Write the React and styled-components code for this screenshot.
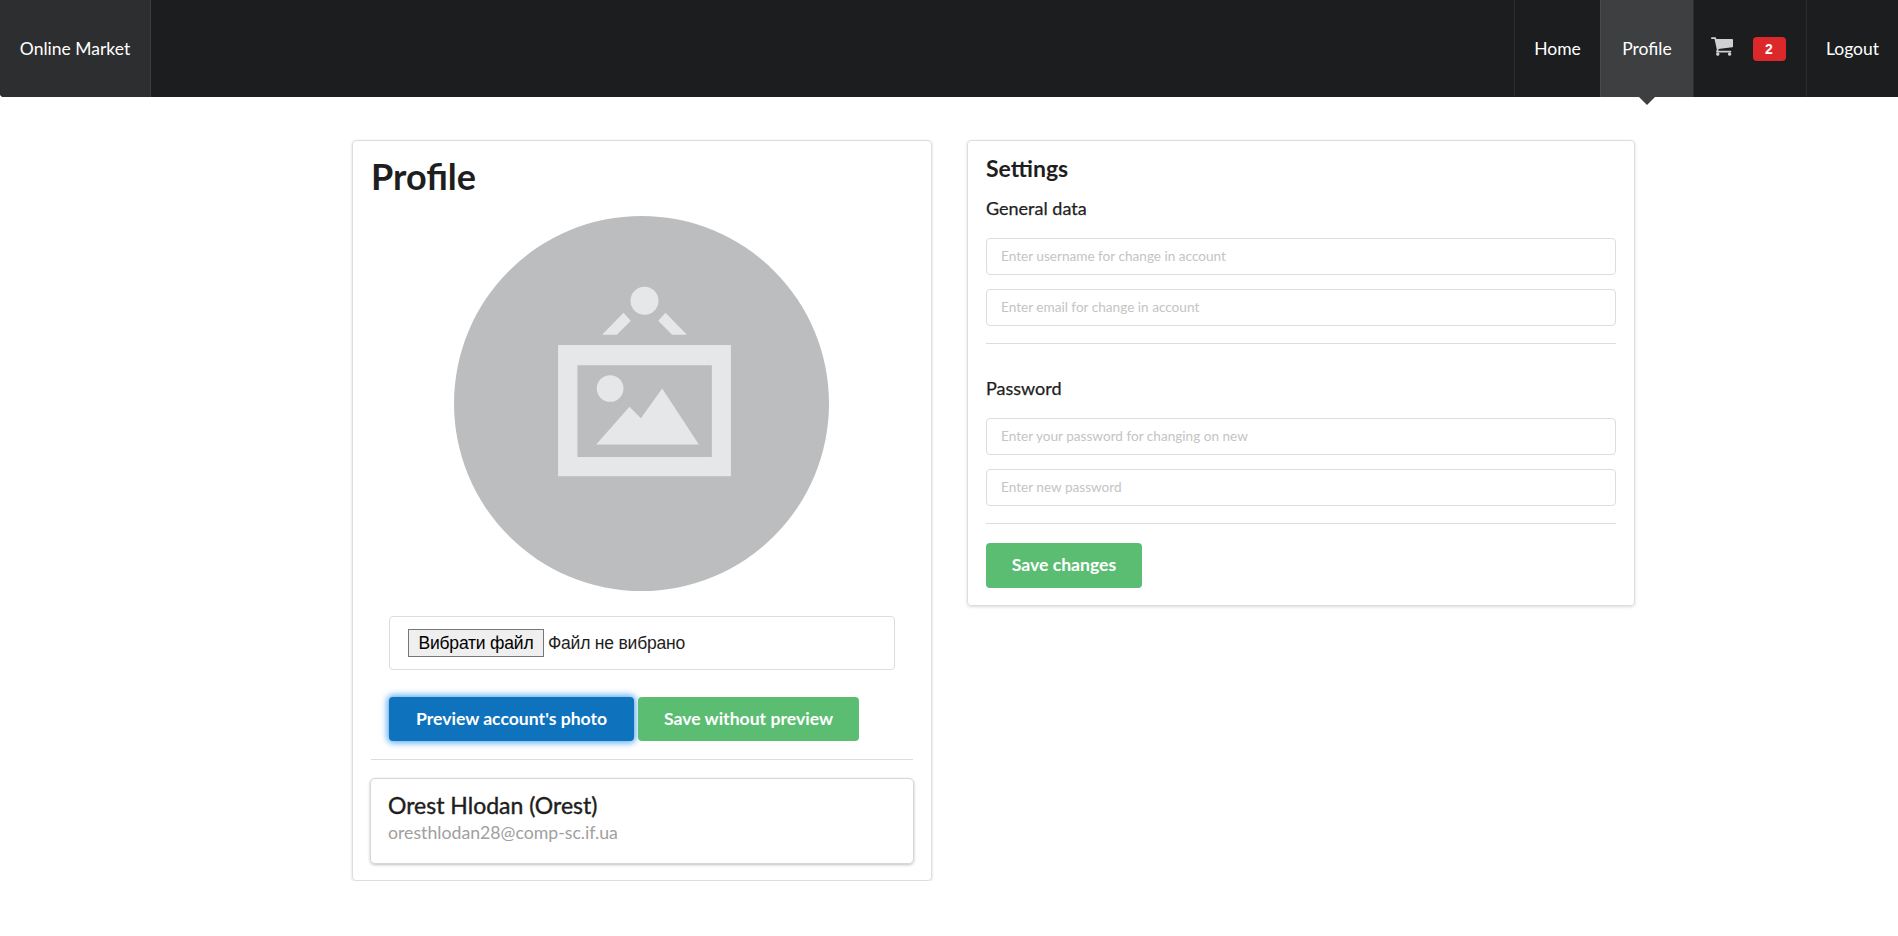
import React from 'react';
import styled, { createGlobalStyle } from 'styled-components';

const GlobalStyle = createGlobalStyle`
    body {
        margin: 0;
        background: #fff;
        font-family: Lato, "Liberation Sans", sans-serif;
        color: #1e1e1e;
    }
`;

const Navbar = styled.nav`
    display: flex;
    height: 97px;
    background: #1c1d1f;
    border-radius: 0 0 0 4px;
`;

const Brand = styled.div`
    display: flex;
    align-items: center;
    justify-content: center;
    width: 150px;
    background: #2d2e30;
    border-right: 1px solid #3d3e40;
    border-radius: 0 0 0 4px;
    color: #fff;
    font-size: 17.5px;
`;

const NavRight = styled.div`
    display: flex;
    margin-left: auto;
`;

const NavItem = styled.div`
    position: relative;
    box-sizing: border-box;
    display: flex;
    align-items: center;
    justify-content: center;
    gap: ${(p) => p.$gap || 0}px;
    width: ${(p) => p.$width}px;
    padding-right: ${(p) => p.$gap ? 4 : 0}px;
    border-left: 1px solid ${(p) => (p.$active ? '#4a4b4d' : '#2c2d2f')};
    background: ${(p) => (p.$active ? '#3e3f41' : 'transparent')};
    color: #fff;
    font-size: 17.5px;

    ${(p) => p.$active && `
        &::after {
            content: '';
            position: absolute;
            left: 50%;
            top: 97px;
            margin-left: -8px;
            border: 8px solid transparent;
            border-top-color: #3e3f41;
            border-bottom: 0;
        }
    `}
`;

const CartIcon = styled.svg`
    width: 22px;
    height: 19px;
    margin-top: -5px;
    fill: #d0d0d0;
`;

const Badge = styled.span`
    display: flex;
    align-items: center;
    justify-content: center;
    width: 33px;
    height: 24px;
    background: #dc282b;
    border-radius: 4px;
    font-family: "Liberation Sans", sans-serif;
    font-size: 14px;
    font-weight: 700;
`;

const Main = styled.main`
    display: flex;
    align-items: flex-start;
    gap: 35px;
    padding: 43px 0 0 352px;
`;

const Card = styled.section`
    box-sizing: border-box;
    width: ${(p) => p.$width}px;
    padding: ${(p) => p.$padding};
    border: 1px solid #ddd;
    border-radius: 4px;
    box-shadow: 0 1px 3px rgba(0, 0, 0, 0.15);
`;

const PageTitle = styled.h1`
    margin: 0;
    font-size: 36px;
    line-height: 44px;
    font-weight: 700;
`;

const Avatar = styled.svg`
    display: block;
    width: 375px;
    height: 375px;
    margin: 18px 0 25px 83px;
`;

const FileBox = styled.div`
    box-sizing: border-box;
    display: flex;
    align-items: center;
    gap: 4px;
    height: 54px;
    margin: 0 18px;
    padding: 0 18px;
    border: 1px solid #ddd;
    border-radius: 4px;
    font-family: "Liberation Sans", sans-serif;
    font-size: 17.5px;
    letter-spacing: -0.2px;
`;

const FileButton = styled.button`
    height: 28px;
    padding: 0 9.5px;
    border: 1px solid #767676;
    border-radius: 0;
    background: #efefef;
    color: #000;
    font: inherit;
    letter-spacing: inherit;
`;

const ButtonRow = styled.div`
    display: flex;
    gap: 4px;
    margin: 27px 18px 0;
`;

const Button = styled.button`
    height: ${(p) => p.$height || 44}px;
    padding: 0 0 2px;
    width: ${(p) => p.$width}px;
    border: 0;
    border-radius: 4px;
    background: ${(p) => (p.$primary ? '#0e72bd' : '#5bbd72')};
    box-shadow: ${(p) => (p.$primary ? '0 0 6px 2px rgba(40, 145, 235, 0.75)' : 'none')};
    color: #fff;
    font-family: Lato, sans-serif;
    font-size: 17.6px;
    font-weight: 700;
`;

const Divider = styled.hr`
    height: 1px;
    margin: ${(p) => p.$margin};
    border: 0;
    background: #ddd;
`;

const UserBox = styled.div`
    box-sizing: border-box;
    height: 86px;
    margin: 0 -1px;
    padding: 12px 17px;
    border: 1px solid #d6d6d6;
    border-radius: 5px;
    box-shadow: 0 1px 3px rgba(0, 0, 0, 0.25);
`;

const UserName = styled.div`
    font-size: 23px;
    line-height: 28px;
    font-weight: 400;
    -webkit-text-stroke: 0.4px #1e1e1e;
`;

const UserEmail = styled.div`
    margin-top: 3px;
    color: #a0a0a0;
    font-size: 17.7px;
    line-height: 22px;
`;

const SettingsTitle = styled.h2`
    margin: 0;
    font-size: 23px;
    line-height: 28px;
    font-weight: 700;
`;

const SectionTitle = styled.h3`
    margin: ${(p) => p.$margin};
    font-size: 18px;
    line-height: 22px;
    font-weight: 400;
    -webkit-text-stroke: 0.25px #1e1e1e;
`;

const Field = styled.input`
    box-sizing: border-box;
    display: block;
    width: 100%;
    height: 37px;
    margin-bottom: 14px;
    padding: 0 14px 2px;
    border: 1px solid #ddd;
    border-radius: 4px;
    font-family: Lato, sans-serif;
    font-size: 13.6px;

    &::placeholder {
        color: #c4c4c4;
    }
`;

const Picture = () => (
    <Avatar viewBox="42 18 1124 1124">
        <circle cx="604" cy="580" r="562" fill="#bcbdbf" />
        <g fill="#e6e7e9">
            <circle cx="613" cy="272" r="42" />
            <polygon points="550,308 572,332 530,374 486,374" />
            <polygon points="676,308 654,332 696,374 740,374" />
            <path fillRule="evenodd" d="M354 405H872V798H354ZM412 465V740H815V465Z" />
            <circle cx="510" cy="535" r="40" />
            <polygon points="468,703 568,590 602,624 666,535 776,703" />
        </g>
    </Avatar>
);

const App = () => (
    <React.Fragment>
        <GlobalStyle />
        <Navbar>
            <Brand>Online Market</Brand>
            <NavRight>
                <NavItem $width={86}>Home</NavItem>
                <NavItem $width={93} $active>Profile</NavItem>
                <NavItem $width={113} $gap={20}>
                    <CartIcon viewBox="64 256 1664 1408">
                        <path d="M704 1536q0 52-38 90t-90 38-90-38-38-90 38-90 90-38 90 38 38 90zm896 0q0 52-38 90t-90 38-90-38-38-90 38-90 90-38 90 38 38 90zm128-1088v512q0 24-16.5 42.5t-40.5 21.5l-1044 122q13 60 13 70 0 16-24 64h920q26 0 45 19t19 45-19 45-45 19h-1024q-26 0-45-19t-19-45q0-11 8-31.5t16-36 21.5-40 15.5-29.5l-177-823h-204q-26 0-45-19t-19-45 19-45 45-19h256q16 0 28.5 6.5t19.5 15.5 13 24.5 8 26 5.5 29.5 4.5 26h1201q26 0 45 19t19 45z" />
                    </CartIcon>
                    <Badge>2</Badge>
                </NavItem>
                <NavItem $width={92}>Logout</NavItem>
            </NavRight>
        </Navbar>
        <Main>
            <Card $width={580} $padding="13px 18px 16px">
                <PageTitle>Profile</PageTitle>
                <Picture />
                <FileBox>
                    <FileButton type="button">Вибрати файл</FileButton>
                    Файл не вибрано
                </FileBox>
                <ButtonRow>
                    <Button type="button" $primary $width={245}>Preview account's photo</Button>
                    <Button type="button" $width={221}>Save without preview</Button>
                </ButtonRow>
                <Divider $margin="18px 0 18px" />
                <UserBox>
                    <UserName>Orest Hlodan (Orest)</UserName>
                    <UserEmail>oresthlodan28@comp-sc.if.ua</UserEmail>
                </UserBox>
            </Card>
            <Card $width={668} $padding="13px 18px 17px">
                <SettingsTitle>Settings</SettingsTitle>
                <SectionTitle $margin="15px 0 19px">General data</SectionTitle>
                <Field placeholder="Enter username for change in account" />
                <Field placeholder="Enter email for change in account" />
                <Divider $margin="17px 0 33px" />
                <SectionTitle $margin="0 0 19px">Password</SectionTitle>
                <Field placeholder="Enter your password for changing on new" />
                <Field placeholder="Enter new password" />
                <Divider $margin="17px 0 19px" />
                <Button type="button" $width={156} $height={45}>Save changes</Button>
            </Card>
        </Main>
    </React.Fragment>
);

export default App;
